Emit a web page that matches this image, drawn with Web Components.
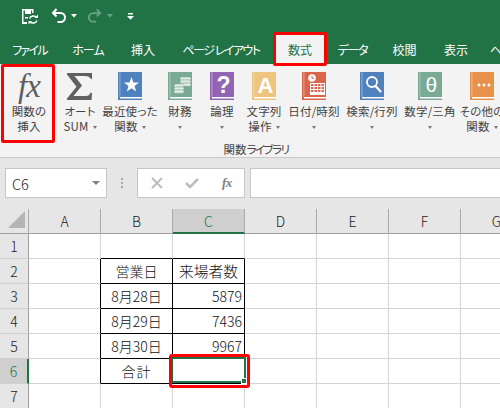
<!DOCTYPE html>
<html lang="ja"><head><meta charset="utf-8"><title>Excel</title>
<style>
html,body{margin:0;padding:0;width:500px;height:408px;overflow:hidden;background:#fff}
body{font-family:"Noto Sans CJK JP","Noto Sans",sans-serif}
.k{letter-spacing:-1.500px}
</style></head><body>
<x-app>
  <x-qat></x-qat>
  <x-tabs>
    <x-tab w="59" ls="-1.700">ファイル</x-tab><x-tab w="58" ls="-1">ホーム</x-tab><x-tab w="52">挿入</x-tab><x-tab w="104" ls="-1.500">ページ レイアウト</x-tab><x-tab w="54" active>数式</x-tab><x-tab w="51" ls="-1.300">データ</x-tab><x-tab w="53">校閲</x-tab><x-tab w="50">表示</x-tab><x-tab w="19" clip>ヘルプ</x-tab>
  </x-tabs>
  <x-ribbon>
    <x-rb w="54" hl><span slot="icon" class="fx">fx</span>関数の<br>挿入</x-rb>
    <x-rb w="50"><svg slot="icon" width="26" height="28" viewBox="0 0 26 28"><path d="M0 1H25V7.500L23 6Q22 4 18 4H7.500L15 13.500L6.500 24H19Q22.500 24 23.500 20.500L25 21L24.500 28H0V26.500L9.500 14.800L0 2.500Z" fill="#606060"/></svg>オート<br>SUM<x-caret></x-caret></x-rb>
    <x-rb w="50"><x-book slot="icon" color="#4f81bd"><svg viewBox="0 0 24 28"><path d="M13.500 5L15.400 10.600H21L16.500 14L18.200 19.500L13.500 16.200L8.800 19.500L10.500 14L6 10.600H11.600Z" fill="#fff"/></svg></x-book>最近使った<br>関数<x-caret></x-caret></x-rb>
    <x-rb w="50"><x-book slot="icon" color="#7aa995"><svg viewBox="0 0 24 28"><g fill="#e4eee9" stroke="#7aa995" stroke-width=".6"><rect x="12" y="5" width="11" height="3.200" rx="1.500"/><rect x="12" y="8" width="11" height="3.200" rx="1.500"/><rect x="12" y="11" width="11" height="3.200" rx="1.500"/><rect x="6" y="12" width="10" height="3.200" rx="1.500"/><rect x="6" y="15" width="10" height="3.200" rx="1.500"/><rect x="6" y="18" width="10" height="3.200" rx="1.500"/></g></svg></x-book>財務<br><x-caret solo></x-caret></x-rb>
    <x-rb w="34"><x-book slot="icon" color="#9464b4"><svg viewBox="0 0 24 28"><text x="13.500" y="21" font-family="Liberation Sans" font-weight="700" font-size="23" fill="#fff" text-anchor="middle">?</text></svg></x-book>論理<br><x-caret solo></x-caret></x-rb>
    <x-rb w="50"><x-book slot="icon" color="#edc57f"><svg viewBox="0 0 24 28"><text x="13.500" y="20.500" font-family="Liberation Sans" font-weight="700" font-size="22" fill="#fff" text-anchor="middle">A</text></svg></x-book>文字列<br>操作<x-caret></x-caret></x-rb>
    <x-rb w="50"><x-book slot="icon" color="#d9654a"><svg viewBox="0 0 24 28"><circle cx="10" cy="6" r="3.800" fill="#fff"/><path d="M10 3.800V6.300H12" stroke="#d9654a" fill="none"/><path fill="#fff" fill-rule="evenodd" d="M8 11H23V23H8ZM9 12V14H11.500V12ZM12.500 12V14H15V12ZM16 12V14H18.500V12ZM19.500 12V14H22V12ZM9 15V17H11.500V15ZM12.500 15V17H15V15ZM16 15V17H18.500V15ZM19.500 15V17H22V15ZM9 18V20H11.500V18ZM12.500 18V20H15V18ZM16 18V20H18.500V18ZM19.500 18V20H22V18Z"/></svg></x-book>日付/時刻<br><x-caret solo></x-caret></x-rb>
    <x-rb w="66"><x-book slot="icon" color="#4f81bd"><svg viewBox="0 0 24 28"><circle cx="12" cy="10" r="5" fill="none" stroke="#fff" stroke-width="1.800"/><path d="M15.500 14L21 20" stroke="#fff" stroke-width="2.200"/></svg></x-book>検索/行列<br><x-caret solo></x-caret></x-rb>
    <x-rb w="50"><x-book slot="icon" color="#7aa995"><svg viewBox="0 0 24 28"><text x="13.500" y="20" font-family="Liberation Sans" font-size="21" fill="#fff" text-anchor="middle">θ</text></svg></x-book>数学/三角<br><x-caret solo></x-caret></x-rb>
    <x-rb w="54"><x-book slot="icon" color="#e8914a"><svg viewBox="0 0 24 28"><circle cx="9" cy="13" r="1.500" fill="#fff"/><circle cx="14" cy="13" r="1.500" fill="#fff"/><circle cx="19" cy="13" r="1.500" fill="#fff"/></svg></x-book>その他の<br>関数<x-caret></x-caret></x-rb>
    <span slot="group">関数<span class="k">ライブラリ</span></span>
  </x-ribbon>
  <x-formula></x-formula>
  <x-sheet></x-sheet>
</x-app>
<script>
const mk=(tag,css,html,init)=>customElements.define(tag,class extends HTMLElement{
  connectedCallback(){ if(this.shadowRoot)return; const s=this.attachShadow({mode:'open'});
    s.innerHTML=`<style>${css}</style>${typeof html==='function'?html(this):html}`; init&&init(this,s);}
});
mk('x-app',':host{display:flex;flex-direction:column;width:500px;height:408px;overflow:hidden}','<slot></slot>');
mk('x-qat',`:host{display:flex;align-items:center;height:32px;background:#217346;box-sizing:border-box;padding:0 0 0 22px}
 svg{display:block} `,`
 <svg width="16" height="15" viewBox="0 0 16 15" style="margin-top:1px"><path d="M0 0H11.500V4H10V1.500H9V5H3V1.500H1.500V13H5V15H0Z" fill="#fff"/><path d="M3 8H6V9.500H3Z" fill="#fff"/><path d="M7.500 9.500A4 3.800 0 0 1 14.500 8.500M15 11.500A4 3.800 0 0 1 8 12.500" fill="none" stroke="#fff" stroke-width="1.400"/><path d="M12.500 9H16V5.500ZM10 12H6.500V15.500Z" fill="#fff"/></svg>
 <svg width="16" height="15" viewBox="0 0 16 15" style="margin-left:13px;margin-top:-1px"><path d="M5.500 1L2 5L5.500 8.500" fill="none" stroke="#fff" stroke-width="2"/><path d="M2.500 5H9.500A4.500 4.500 0 0 1 9.500 14H6.500" fill="none" stroke="#fff" stroke-width="2"/></svg>
 <svg width="6" height="4" viewBox="0 0 6 4" style="margin-left:4px"><path d="M0 0H6L3 3.500Z" fill="#fff"/></svg>
 <svg width="15" height="15" viewBox="0 0 16 15" style="margin-left:10px;margin-top:-1px"><path d="M10.500 1L14 5L10.500 8.500" fill="none" stroke="#6aa386" stroke-width="2"/><path d="M13.500 5H6.500A4.500 4.500 0 0 0 6.500 14H9.500" fill="none" stroke="#6aa386" stroke-width="2"/></svg>
 <svg width="6" height="4" viewBox="0 0 6 4" style="margin-left:5px"><path d="M0 0H6L3 3.500Z" fill="#6aa386"/></svg>
 <svg width="7" height="7" viewBox="0 0 7 7" style="margin-left:14px"><path d="M1 0H6V1.500H1ZM0 3H7L3.500 6.800Z" fill="#fff"/></svg>`);
mk('x-tabs',':host{display:flex;height:32px;background:#217346;position:relative;z-index:2}','<slot></slot>');
mk('x-tab',`:host{display:flex;box-sizing:border-box;height:32px;padding-top:2px;align-items:center;justify-content:center;flex:none;color:#fff;font-size:12px;font-feature-settings:"palt";white-space:nowrap;overflow:hidden}
 :host([active]){background:#f3f3f3;color:#217346;height:34px;border:3px solid #f00;border-radius:2px;padding-top:0}
 :host([clip]){justify-content:flex-start;padding-left:9px;overflow:hidden}`,'<slot></slot>',
 el=>{el.style.width=el.getAttribute('w')+'px';if(el.hasAttribute('ls'))el.style.letterSpacing=el.getAttribute('ls')+'px'});
mk('x-ribbon',`:host{display:flex;flex-direction:column;height:94px;box-sizing:border-box;background:#f3f3f3;border-bottom:1px solid #c9c9c9;overflow:hidden}
 .row{display:flex;padding-left:1px;height:78px}
 .g{display:flex;justify-content:center;height:15px;font-size:11.500px;font-feature-settings:"palt";color:#444;line-height:15px;padding-left:12px}`,
 '<div class="row"><slot></slot></div><div class="g"><slot name="group"></slot></div>');
mk('x-rb',`:host{display:flex;flex:none;flex-direction:column;align-items:center;box-sizing:border-box;height:78px;color:#444;font-size:11.500px;letter-spacing:.2px;line-height:15px;font-feature-settings:"palt";white-space:nowrap;text-align:center;padding-top:8px}
 :host([hl]){border:3px solid #f00;border-radius:2px;height:79px;padding-top:5px;padding-left:2px}
 .i{height:28px;display:flex;justify-content:center;align-items:flex-start}
 .t{margin-top:4px;display:block}
 ::slotted(.fx){font:italic 33px/28px "Liberation Serif",serif;color:#5f5f5f;letter-spacing:-1px}`,
 '<div class="i"><slot name="icon"></slot></div><div class="t"><slot></slot></div>',
 el=>{el.style.width=el.getAttribute('w')+'px'});
mk('x-caret',`:host{display:inline-block;width:0;height:0;border:solid transparent;border-width:3px 2.500px 0;border-top-color:#777;margin-left:4px;vertical-align:2px}
 :host([solo]){margin-left:0}`,'');
mk('x-book',`:host{display:block;position:relative;width:24px;height:28px}
 svg{display:block}
 ::slotted(svg){position:absolute;left:0;top:0;width:24px;height:28px}`,el=>`<svg width="24" height="28" viewBox="0 0 24 28">
 <rect width="24" height="28" fill="${el.getAttribute('color')}"/>
 <rect x="1.600" y="0" width=".7" height="25" fill="#fff" opacity=".55"/>
 <rect x="2" y="25" width="22" height="1.500" fill="#fff"/></svg><slot></slot>`);
mk('x-formula',`:host{display:flex;align-items:center;height:51px;box-sizing:border-box;background:#e6e6e6;padding:0 0 1px 5px}
 .box{box-sizing:border-box;height:30px;background:#fff;border:1px solid #c6c6c6;display:flex;align-items:center}
 .name{width:102px;padding-left:6px;justify-content:space-between;font:300 14.500px "Noto Sans CJK JP",sans-serif;color:#222}
 .arrow{width:0;height:0;border:solid transparent;border-width:4px 4px 0;border-top-color:#808080;margin-right:6px}
 .dots{width:30px;display:flex;flex-direction:column;align-items:center;gap:2px}
 .dots i{width:2px;height:2px;background:#a6a6a6;display:block}
 .btns{width:108px;padding-left:13px;gap:20px;margin-right:5px}
 .fn{font:italic 700 13px "Liberation Serif",serif;color:#808080;margin-left:3px;letter-spacing:-.5px}
 .bar{flex:1;margin-right:-2px}`,`
 <div class="box name"><span>C6</span><span class="arrow"></span></div>
 <div class="dots"><i></i><i></i><i></i></div>
 <div class="box btns">
 <svg width="12" height="12" viewBox="0 0 12 12"><path d="M1 1L11 11M11 1L1 11" stroke="#bdbdbd" stroke-width="2"/></svg>
 <svg width="14" height="12" viewBox="0 0 14 12" style="margin-left:2px"><path d="M1 6L5 10L13 2" fill="none" stroke="#bdbdbd" stroke-width="2.500"/></svg>
 <span class="fn">fx</span></div>
 <div class="box bar"></div>`);
mk('x-sheet',`:host{display:block;position:relative;height:199px;overflow:hidden;background:#fff}
 .g{display:grid;grid-template-columns:29px repeat(7,72px);grid-auto-rows:25px;font:300 14px/24px "Noto Sans CJK JP",sans-serif;color:#111}
 .c{box-sizing:border-box;border-right:1px solid #d4d4d4;border-bottom:1px solid #d4d4d4;padding:0 2px;white-space:nowrap;overflow:hidden}
 .h{background:#e6e6e6;text-align:center;color:#222;border-right:1px solid #ababab;border-bottom:1px solid #9e9e9e}
 .ch{padding-top:1px;line-height:23px}
 .rh{border-bottom-color:#d0d0d0;border-right:1px solid #9e9e9e}
 .sel{background:#cfcfcf;color:#217346}
 .cs{border-bottom:2px solid #217346}
 .rs{border-right:2px solid #217346}
 .ctr{text-align:center}.r{text-align:right}
 .kr{border-right-color:#000}.kb{border-bottom-color:#000}
 .wide{font-size:14.700px}
 .sp{letter-spacing:1px}
 .corner{width:0;height:0;border-style:solid;border-width:0 0 17px 17px;border-color:transparent transparent #b5b5b5 transparent;margin:2px 0 0 8px}
 .active{position:absolute;left:171px;top:148px;width:75px;height:26px;box-sizing:border-box;border:2px solid #217346}
 .active::after{content:"";position:absolute;right:-3px;bottom:-3px;width:4px;height:4px;background:#217346;border:1px solid #fff}
 .red{position:absolute;left:169px;top:145px;width:81px;height:34px;box-sizing:border-box;border:3px solid #f00;border-radius:3px}`,
 '<div class="g"></div><div class="active"></div><div class="red"></div>',
 (el,s)=>{
  const g=s.querySelector('.g'),cols=['A','B','C','D','E','F','G'];
  const data={2:['','営業日','来場者数'],3:['','8月28日','5879'],4:['','8月29日','7436'],5:['','8月30日','9967'],6:['','合計','']};
  let h=`<div class="c h" style="padding:0"><div class="corner"></div></div>`;
  cols.forEach(c=>h+=`<div class="c h ch ${c==='C'?'sel cs':''}">${c}</div>`);
  for(let r=1;r<=7;r++){
    h+=`<div class="c h rh ${r===6?'sel rs':''}">${r}</div>`;
    cols.forEach((c,i)=>{
      const inT=r>=2&&r<=6&&(c==='B'||c==='C');
      const cl=['c'];
      if(inT)cl.push('kr','kb'); if(c==='A'&&r>=2&&r<=6)cl.push('kr'); if(r===1&&(c==='B'||c==='C'))cl.push('kb');
      const v=(data[r]&&data[r][i])||'';
      if(/^\d+$/.test(v))cl.push('r'); else cl.push('ctr');
      if(v==='来場者数')cl.push('wide');
      if(v==='合計')cl.push('sp');
      h+=`<div class="${cl.join(' ')}">${v}</div>`;
    });
  }
  g.innerHTML=h;
 });
</script>
</body></html>
